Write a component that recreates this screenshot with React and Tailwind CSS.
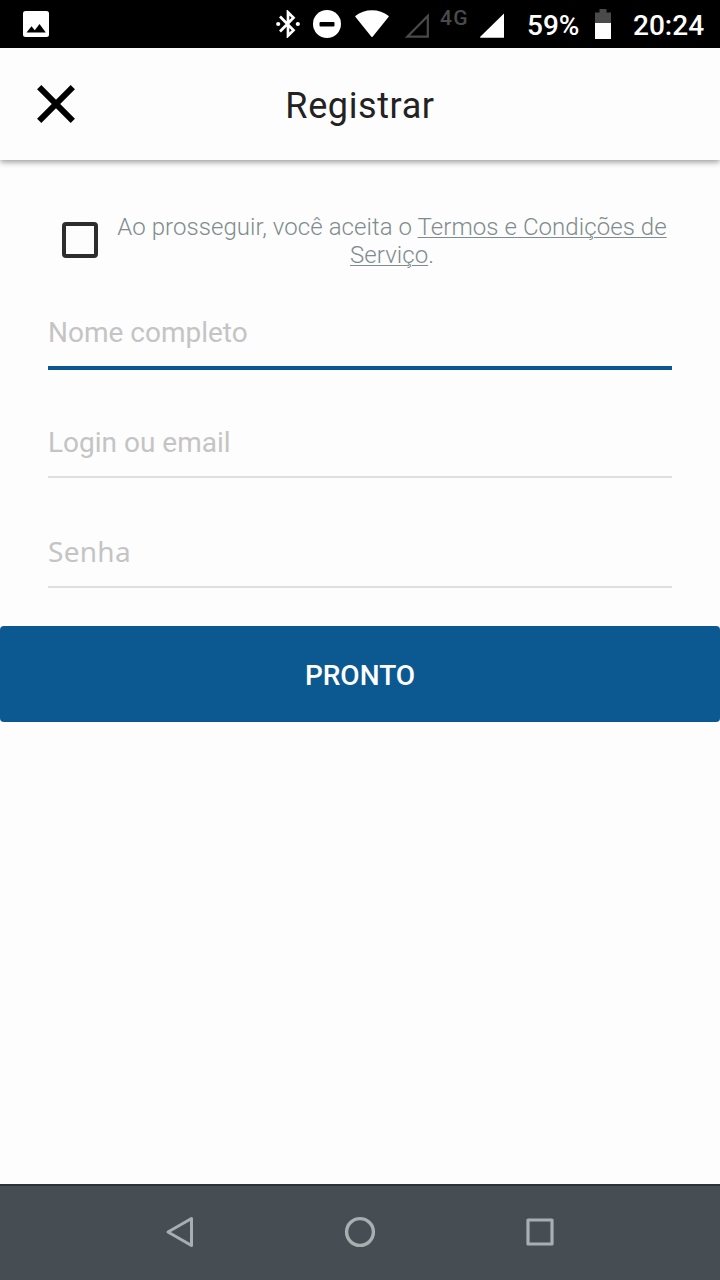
import { useState } from "react";

const fields = [
  { name: "name", type: "text", placeholder: "Nome completo" },
  { name: "login", type: "text", placeholder: "Login ou email" },
  { name: "password", type: "password", placeholder: "Senha" },
];

function StatusBar() {
  return (
    <div className="flex h-12 shrink-0 items-center bg-black pl-[22px] pr-[15px] text-white">
      <svg className="h-7 w-7" viewBox="0 0 28 28">
        <rect x="1" y="1" width="26" height="26" rx="2.5" fill="#fff" />
        <path d="M4.5 22.5l5-6.3 3.3 4 4.7-6.2 6.3 8.5z" fill="#000" />
      </svg>

      {/* Bluetooth */}
      <svg className="ml-auto h-7 w-6" viewBox="0 0 24 28">
        <path
          d="M4 6.5L17.5 20.3 12 25.7V2.3L17.5 7.7 4 21.5"
          fill="none"
          stroke="#fff"
          strokeWidth="2.7"
        />
        <circle cx="2.2" cy="14" r="2.1" fill="#fff" />
        <circle cx="21.8" cy="14" r="2.1" fill="#fff" />
      </svg>

      {/* Do not disturb */}
      <svg className="ml-[13px] h-7 w-7" viewBox="0 0 28 28">
        <circle cx="14" cy="14" r="14" fill="#fff" />
        <rect x="6.5" y="12" width="15" height="4.5" rx="1" fill="#000" />
      </svg>

      {/* Wifi */}
      <svg className="ml-[14px] h-7 w-[34px]" viewBox="0 0 34 28">
        <path
          d="M0.3 6C9.5-1.7 24.5-1.7 33.7 6Q34 6.4 33.5 7L17.6 26.7Q17 27.5 16.4 26.7L0.5 7Q0 6.4 0.3 6z"
          fill="#fff"
        />
      </svg>

      {/* Mobile signal, first sim */}
      <svg className="ml-4 h-7 w-6" viewBox="0 0 24 28">
        <path
          d="M2.5 26.6L22.8 6v20.6z"
          fill="none"
          stroke="#4a4a4a"
          strokeWidth="2.2"
        />
      </svg>
      <span className="ml-[11px] -mt-[12px] w-[31px] text-[21px] font-medium leading-5 tracking-[1.2px] text-[#4a4a4a]">
        4G
      </span>

      {/* Mobile signal, second sim */}
      <svg className="ml-[9px] h-7 w-6" viewBox="0 0 24 28">
        <path d="M0 27L24 3.5V27.7H0.5z" fill="#fff" />
      </svg>
      <span className="ml-[23px] mt-[3px] w-[52px] text-[28px] font-medium leading-7">
        59%
      </span>

      {/* Battery */}
      <svg className="ml-4 h-[30px] w-4" viewBox="0 0 16 30">
        <path d="M0 3.5h4.5V0h7v3.5H16V14H0z" fill="#4a4a4a" />
        <rect y="14" width="16" height="16" fill="#fff" />
      </svg>
      <span className="ml-[22px] mt-[3px] w-[72px] text-[28px] font-medium leading-7">
        20:24
      </span>
    </div>
  );
}

function Header() {
  return (
    <header className="grid h-28 shrink-0 grid-cols-[112px_1fr_112px] items-center bg-[#fdfdfd] shadow-[0_2px_6px_rgba(0,0,0,0.4)]">
      <button aria-label="Fechar" className="flex justify-center">
        <svg className="h-10 w-10" viewBox="0 0 40 40">
          <path
            d="M3.2 3.2l33.6 33.6M36.8 3.2L3.2 36.8"
            fill="none"
            stroke="#000"
            strokeWidth="6"
          />
        </svg>
      </button>
      <h1 className="pt-1 text-center text-[36px] leading-[42px] tracking-[0.6px] text-[#222]">
        Registrar
      </h1>
    </header>
  );
}

function NavBar() {
  return (
    <nav className="flex h-24 shrink-0 items-center justify-center gap-[148px] border-t-2 border-[#2d3336] bg-[#464e53] pb-0.5">
      {/* Back, home, recents */}
      <svg className="h-8 w-8" viewBox="0 0 32 32">
        <path
          d="M27.5 2.5v27L4 16z"
          fill="none"
          stroke="#a9aeb1"
          strokeWidth="3"
          strokeLinejoin="round"
        />
      </svg>
      <svg className="h-8 w-8" viewBox="0 0 32 32">
        <circle
          cx="16"
          cy="16"
          r="13.4"
          fill="none"
          stroke="#a9aeb1"
          strokeWidth="3.4"
        />
      </svg>
      <svg className="h-8 w-8" viewBox="0 0 32 32">
        <rect
          x="4"
          y="4"
          width="24"
          height="24"
          fill="none"
          stroke="#a9aeb1"
          strokeWidth="3.2"
          strokeLinejoin="round"
        />
      </svg>
    </nav>
  );
}

export default function App() {
  const [accepted, setAccepted] = useState(false);
  const [form, setForm] = useState({ name: "", login: "", password: "" });
  const [active, setActive] = useState("name");

  const handleChange = (e) => {
    setForm({ ...form, [e.target.name]: e.target.value });
  };

  return (
    <div className="flex h-[1280px] w-[720px] flex-col overflow-hidden bg-[#fdfdfd] font-['Roboto',sans-serif]">
      <StatusBar />
      <Header />

      <form
        className="flex flex-1 flex-col"
        onSubmit={(e) => e.preventDefault()}
      >
        <div className="flex h-[150px] items-start pl-[62px] pt-[53px]">
          <input
            type="checkbox"
            checked={accepted}
            onChange={(e) => setAccepted(e.target.checked)}
            className="mt-[9px] h-9 w-9 shrink-0 appearance-none rounded-[4px] border-4 border-[#2d2d2d] checked:bg-[#2d2d2d]"
          />
          <p className="ml-4 w-[556px] text-center text-[24px] font-light leading-7 tracking-[0.07px] text-[#7f8c8d]">
            Ao prosseguir, você aceita o{" "}
            <a className="underline decoration-1 underline-offset-[2px]">
              Termos e Condições de Serviço
            </a>
            .
          </p>
        </div>

        <div className="flex flex-col px-12">
          {fields.map((f) => (
            <div key={f.name} className="h-[110px]">
              <input
                name={f.name}
                type={f.type}
                placeholder={f.placeholder}
                value={form[f.name]}
                onChange={handleChange}
                onFocus={() => setActive(f.name)}
                className={`block w-full text-[28px] leading-10 text-[#222] outline-none placeholder:text-[#c4c4c4] ${
                  active === f.name
                    ? "h-[60px] border-b-4 border-[#0c5991] pb-3"
                    : "h-[58px] border-b-2 border-[#e0e0e0]"
                } ${
                  f.type === "password"
                    ? "pb-[14px] font-['Noto_Sans',sans-serif] tracking-[0.3px]"
                    : "pb-3"
                }`}
              />
            </div>
          ))}
        </div>

        <button
          type="submit"
          className="-mt-[14px] h-24 w-full rounded-[4px] bg-[#0c5991] pt-[3px] text-[28px] font-medium text-white"
        >
          PRONTO
        </button>
      </form>

      <NavBar />
    </div>
  );
}
